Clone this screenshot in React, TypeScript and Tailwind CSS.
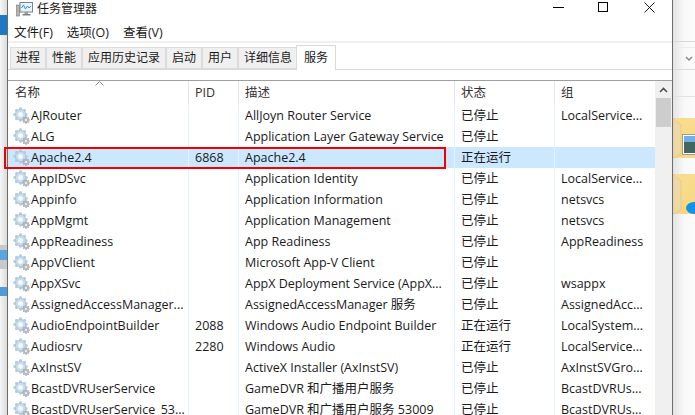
import { useId } from 'react'
import type { ReactNode } from 'react'

const font = { sans: "font-['Open_Sans','Noto_Sans_CJK_SC',sans-serif]" }

interface Row {
  name: string
  pid?: string
  desc: string
  status: string
  group?: string
  selected?: boolean
}

const rows: Row[] = [
  { name: 'AJRouter', desc: 'AllJoyn Router Service', status: '已停止', group: 'LocalService...' },
  { name: 'ALG', desc: 'Application Layer Gateway Service', status: '已停止' },
  { name: 'Apache2.4', pid: '6868', desc: 'Apache2.4', status: '正在运行', selected: true },
  { name: 'AppIDSvc', desc: 'Application Identity', status: '已停止', group: 'LocalService...' },
  { name: 'Appinfo', desc: 'Application Information', status: '已停止', group: 'netsvcs' },
  { name: 'AppMgmt', desc: 'Application Management', status: '已停止', group: 'netsvcs' },
  { name: 'AppReadiness', desc: 'App Readiness', status: '已停止', group: 'AppReadiness' },
  { name: 'AppVClient', desc: 'Microsoft App-V Client', status: '已停止' },
  { name: 'AppXSvc', desc: 'AppX Deployment Service (AppX...', status: '已停止', group: 'wsappx' },
  { name: 'AssignedAccessManager...', desc: 'AssignedAccessManager 服务', status: '已停止', group: 'AssignedAcc...' },
  { name: 'AudioEndpointBuilder', pid: '2088', desc: 'Windows Audio Endpoint Builder', status: '正在运行', group: 'LocalSystem...' },
  { name: 'Audiosrv', pid: '2280', desc: 'Windows Audio', status: '正在运行', group: 'LocalService...' },
  { name: 'AxInstSV', desc: 'ActiveX Installer (AxInstSV)', status: '已停止', group: 'AxInstSVGro...' },
  { name: 'BcastDVRUserService', desc: 'GameDVR 和广播用户服务', status: '已停止', group: 'BcastDVRUs...' },
  { name: 'BcastDVRUserService_53...', desc: 'GameDVR 和广播用户服务 53009', status: '已停止', group: 'BcastDVRUs...' },
]

const tabs = ['进程', '性能', '应用历史记录', '启动', '用户', '详细信息']

function Gear() {
  const teeth = [0, 45, 90, 135, 180, 225, 270, 315]
  return (
    <svg width="18" height="17" viewBox="0 0 18 17" className="shrink-0">
      {teeth.map((a) => (
        <rect key={a} x="6.2" y="0.5" width="2.6" height="14" rx="1" fill="#b4cde2" transform={`rotate(${a} 7.5 7.5)`} />
      ))}
      <circle cx="7.5" cy="7.5" r="5.2" fill="#c6dbec" stroke="#a3c0d8" strokeWidth="0.7" />
      <circle cx="7.5" cy="7.5" r="2.9" fill="#f8fbfd" stroke="#bcd2e4" strokeWidth="0.6" />
      {teeth.map((a) => (
        <rect key={a} x="12.4" y="9.4" width="1.2" height="7.2" fill="#a2a9af" transform={`rotate(${a} 13 13)`} />
      ))}
      <circle cx="13" cy="13" r="2.5" fill="#b5bbc0" />
      <circle cx="13" cy="13" r="1.1" fill="#f7f7f7" />
    </svg>
  )
}

function AppIcon() {
  return (
    <svg width="17" height="17" viewBox="0 0 17 17" className="mt-[-5px] shrink-0">
      <rect x="0.5" y="4" width="3" height="11" fill="#b5b5b0" stroke="#77787a" strokeWidth="0.6" />
      <rect x="4" y="1.5" width="12.5" height="9.5" fill="#e8f3fb" stroke="#7b8288" />
      <path d="M5.5 7l2-3 2 4 2-3 1.5 2 2-2" fill="none" stroke="#3d8fc9" strokeWidth="1" />
      <rect x="8.5" y="11" width="3.5" height="2" fill="#9a9d9f" />
      <rect x="6.5" y="13" width="8" height="1.5" fill="#7b8288" />
    </svg>
  )
}

function Folder({ photo }: { photo?: boolean }) {
  const id = useId()
  return (
    <svg width="23" height="42" viewBox="0 0 23 42" className="block">
      <defs>
        <linearGradient id={id} x1="0" y1="0" x2="0" y2="1">
          <stop offset="0" stopColor="#f9dd8e" />
          <stop offset="1" stopColor="#f6d87f" />
        </linearGradient>
      </defs>
      <rect width="23" height="40" fill={`url(#${id})`} />
      <path d="M0 0l8 7v29L0 40z" fill="#eed9a6" stroke="#d9bd74" strokeWidth="0.5" />
      {photo ? (
        <g>
          <rect x="9.5" y="16.5" width="14" height="20" fill="#fff" stroke="#9b9b9b" />
          <rect x="11" y="18" width="12" height="8" fill="#6fb0e6" />
          <rect x="11" y="24" width="12" height="11" fill="#41685f" />
        </g>
      ) : (
        <ellipse cx="21" cy="34" rx="8" ry="6" fill="#0a95f2" />
      )}
    </svg>
  )
}

function Cell({ className, children }: { className: string; children?: ReactNode }) {
  return <div className={`shrink-0 overflow-hidden whitespace-nowrap ${className}`}>{children}</div>
}

export default function App() {
  return (
    <div className={`relative flex h-[415px] w-[695px] overflow-hidden bg-white text-[12.5px] text-[#1a1a1a] ${font.sans}`}>
      {/* Desktop behind, left side */}
      <div className="flex w-[7px] shrink-0 flex-col bg-gradient-to-r from-[#f6f6f6] to-[#dcdcdc]">
        <div className="mt-[15px] h-[20px] bg-[#1f78c1]" />
        <div className="mt-[210px] h-[24px] bg-[#c9c9c9]">
          <div className="mt-[5px] h-[10px] w-[7px] bg-[#5ba4dc]" />
        </div>
        <div className="mt-[18px] h-[9px] bg-[#4f9bd8]" />
      </div>

      {/* Task manager window */}
      <div className="flex h-[415px] w-[666px] shrink-0 flex-col border-x border-[#6d6d6d] bg-white">
        <div className="flex h-[24px] shrink-0 items-center pl-[8px]">
          <AppIcon />
          <span className="ml-[4px] mt-[-6px] text-[12px]">任务管理器</span>
          <div className="ml-auto flex items-start">
            <div className="mt-[-5px] mr-[34px] h-[1px] w-[11px] bg-black" />
            <div className="mt-[-10px] mr-[36px] h-[10px] w-[10px] border border-black" />
            <svg width="11" height="11" viewBox="0 0 11 11" className="mr-[17px] mt-[-10px]">
              <path d="M0.5 0.5l10 10M10.5 0.5l-10 10" stroke="#000" strokeWidth="0.9" />
            </svg>
          </div>
        </div>

        <div className="flex h-[17px] shrink-0 items-center gap-[14px] pl-[6px] pt-[1px] text-[12.5px]">
          <span>文件(F)</span>
          <span>选项(O)</span>
          <span>查看(V)</span>
        </div>

        <div className="h-[29px] shrink-0 border-b border-[#d9d9d9] bg-white">
          <div className="h-[2px] bg-[#f0f0f0]" />
          <div className="flex pl-[2px] pt-[4px]">
            {tabs.map((t) => (
              <div key={t} className="flex h-[22px] items-center border border-[#dcdcdc] bg-[#f0f0f0] px-[5px] text-[12px] leading-none">
                {t}
              </div>
            ))}
            <div className="relative z-10 ml-[-2px] mt-[-2px] flex h-[25px] items-center border border-b-0 border-[#d9d9d9] bg-white px-[7px] text-[12px]">
              服务
            </div>
          </div>
        </div>

        <div className="h-[11px] shrink-0 border-b-[1px] border-[#a0a0a0]" />

        <div className="flex min-h-0 flex-1">
          <div className="w-[647px] shrink-0">
            {/* Column headers */}
            <div className="relative flex h-[24px] items-center text-[#333]">
              <svg width="9" height="5" viewBox="0 0 9 5" className="absolute left-[87px] top-[0px]">
                <path d="M0.5 4.5l4-4 4 4" fill="none" stroke="#8a8a8a" />
              </svg>
              <Cell className="h-full w-[181px] border-r border-[#e5e5e5] pl-[7px] leading-[23px]">名称</Cell>
              <Cell className="h-full w-[50px] border-r border-[#e5e5e5] pl-[6px] leading-[23px]">PID</Cell>
              <Cell className="h-full w-[216px] border-r border-[#e5e5e5] pl-[6px] leading-[23px]">描述</Cell>
              <Cell className="h-full w-[100px] border-r border-[#e5e5e5] pl-[6px] leading-[23px]">状态</Cell>
              <Cell className="h-full w-[100px] pl-[6px] leading-[23px]">组</Cell>
            </div>

            {rows.map((r) => (
              <div key={r.name} className={`flex h-[21px] items-center ${r.selected ? 'bg-[#cce8ff]' : ''}`}>
                <Cell className="flex h-full w-[181px] items-center border-r border-[#e6f1fb] pl-[5px]">
                  <Gear />
                  <span className="leading-[21px]">{r.name}</span>
                </Cell>
                <Cell className="h-full w-[50px] border-r border-[#e6f1fb] pl-[6px] leading-[21px]">{r.pid}</Cell>
                <Cell className="h-full w-[216px] border-r border-[#e6f1fb] pl-[6px] leading-[21px]">{r.desc}</Cell>
                <Cell className="h-full w-[100px] border-r border-[#e6f1fb] pl-[6px] leading-[21px]">{r.status}</Cell>
                <Cell className="h-full w-[100px] pl-[6px] leading-[21px]">{r.group}</Cell>
              </div>
            ))}
          </div>

          {/* Scrollbar */}
          <div className="flex w-[17px] shrink-0 flex-col bg-[#f0f0f0]">
            <div className="flex h-[17px] items-center justify-center">
              <svg width="9" height="6" viewBox="0 0 9 6">
                <path d="M1 5l3.5-3.5L8 5" fill="none" stroke="#505050" strokeWidth="1.6" />
              </svg>
            </div>
            <div className="ml-px h-[29px] w-[15px] bg-[#cdcdcd]" />
          </div>
        </div>
      </div>

      {/* Desktop behind, right side */}
      <div className="flex min-w-0 flex-1 flex-col bg-gradient-to-r from-[#e4e4e4] via-[#f8f8f8] to-[#fbfbfb]">
        <div className="mt-[41px] h-[1px] bg-[#d9d9d9]" />
        <div className="mt-[5px] h-[1px] bg-[#ebebeb]" />
        <div className="flex h-[22px] items-center justify-end border-b border-[#dcdcdc] pr-[2px]">
          <svg width="8" height="6" viewBox="0 0 8 6">
            <path d="M1 1l3 3 3-3" fill="none" stroke="#8a8a8a" strokeWidth="1.5" />
          </svg>
        </div>
        <div className="mt-[26px] h-[1px] bg-[#e2e2e2]" />
        <div className="mt-[21px]">
          <Folder photo />
        </div>
        <div className="mt-[14px]">
          <Folder />
        </div>
      </div>

      {/* Red annotation round the selected row */}
      <div className="absolute left-[4px] top-[147px] h-[22px] w-[442px] border-2 border-[#f00000]" />
    </div>
  )
}
